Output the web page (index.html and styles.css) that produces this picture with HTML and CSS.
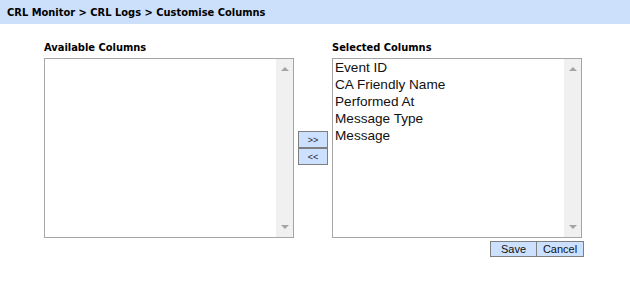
FILE: index.html
```html
<!DOCTYPE html>
<html>
<head>
<meta charset="utf-8">
<link rel="stylesheet" href="styles.css">
</head>
<body>
<div class="header">CRL Monitor &gt; CRL Logs &gt; Customise Columns</div>
<div class="main">
  <div class="col">
    <div class="label">Available Columns</div>
    <div class="listbox">
      <div class="items"></div>
      <div class="scroll"><span class="arrow up"></span><span class="arrow down"></span></div>
    </div>
  </div>
  <div class="mid">
    <button class="mv">&gt;&gt;</button>
    <button class="mv">&lt;&lt;</button>
  </div>
  <div class="col">
    <div class="label">Selected Columns</div>
    <div class="listbox">
      <div class="items">
        <div class="item">Event ID</div>
        <div class="item">CA Friendly Name</div>
        <div class="item">Performed At</div>
        <div class="item">Message Type</div>
        <div class="item">Message</div>
      </div>
      <div class="scroll"><span class="arrow up"></span><span class="arrow down"></span></div>
    </div>
    <div class="actions">
      <button class="act">Save</button><button class="act">Cancel</button>
    </div>
  </div>
</div>
</body>
</html>
```
FILE: styles.css
```css
html, body { margin: 0; padding: 0; background: #fff; }
body { font-family: "DejaVu Sans", Verdana, sans-serif; color: #000; }
.header {
  height: 24px;
  box-sizing: border-box;
  background: #cde0fb;
  font-weight: bold;
  font-size: 11px;
  font-stretch: condensed;
  line-height: 25px;
  padding-left: 7px;
}
.main {
  display: flex;
  padding-left: 44px;
  padding-top: 17px;
}
.col { width: 250px; display: flex; flex-direction: column; }
.label {
  font-weight: bold;
  font-size: 11px;
  font-stretch: condensed;
  line-height: 14px;
  height: 17px;
}
.listbox {
  height: 180px;
  box-sizing: border-box;
  border: 1px solid #a5a5a5;
  display: flex;
}
.items { flex: 1; padding: 0 0 0 2px; }
.item {
  font-family: "Liberation Sans", Arial, sans-serif;
  font-size: 13.6px;
  line-height: 17px;
  color: #111;
}
.scroll {
  width: 17px;
  background: #f0f0f0;
  display: flex;
  flex-direction: column;
  justify-content: space-between;
  align-items: center;
  padding: 8px 0 8px;
}
.arrow { width: 0; height: 0; border-left: 4px solid transparent; border-right: 4px solid transparent; }
.arrow.up { border-bottom: 4px solid #a3a3a3; }
.arrow.down { border-top: 4px solid #a3a3a3; }
.mid {
  width: 38px;
  display: flex;
  flex-direction: column;
  align-items: center;
  padding-top: 90px;
}
.mv {
  width: 30px;
  height: 17px;
  padding: 0;
  background: #cce0ff;
  border: 1px solid #7f7f7f;
  font-family: "Liberation Sans", Arial, sans-serif;
  font-size: 9px;
  color: #222;
  line-height: 14px;
}
.actions {
  display: flex;
  justify-content: flex-end;
  margin-right: -2px;
  margin-top: 3px;
}
.act {
  height: 16px;
  padding: 0;
  background: #cce0ff;
  border: 1px solid #7f7f7f;
  font-family: "Liberation Sans", Arial, sans-serif;
  font-size: 11px;
  line-height: 14px;
  color: #111;
}
.act:first-child { width: 46px; border-right: none; }
.act:last-child { width: 48px; }
```
